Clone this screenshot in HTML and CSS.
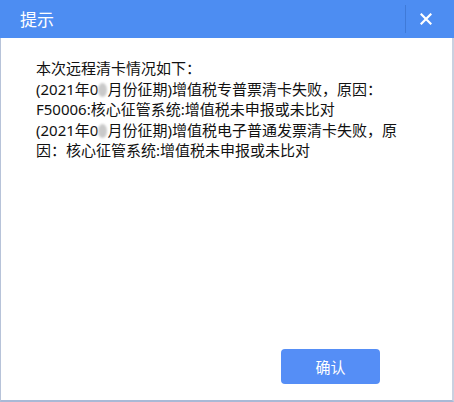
FILE: index.html
```html
<!DOCTYPE html>
<html lang="zh-CN">
<head>
<meta charset="utf-8">
<title>提示</title>
<link rel="stylesheet" href="styles.css">
</head>
<body>
<div class="dialog">
  <div class="titlebar">
    <span class="title">提示</span>
    <span class="sep"></span>
    <span class="close">
      <svg width="12" height="12" viewBox="0 0 12 12"><path d="M1.5 1.5 L10.5 10.5 M10.5 1.5 L1.5 10.5" stroke="#ffffff" stroke-width="2.2" stroke-linecap="square"/></svg>
    </span>
  </div>
  <div class="body">
    <p class="msg">本次远程清卡情况如下：<br>(2021年0<span class="redact"></span>月份征期)增值税专普票清卡失败，原因：<br>F50006:核心征管系统:增值税未申报或未比对<br>(2021年0<span class="redact"></span>月份征期)增值税电子普通发票清卡失败，原<br>因：核心征管系统:增值税未申报或未比对</p>
  </div>
  <div class="footer">
    <button class="btn">确认</button>
  </div>
</div>
</body>
</html>
```

FILE: styles.css
```css
html, body {
  margin: 0;
  padding: 0;
  background: #ffffff;
}
body {
  font-family: "Noto Sans", "Noto Sans CJK SC", sans-serif;
}
.dialog {
  width: 454px;
  height: 402px;
  box-sizing: border-box;
  display: flex;
  flex-direction: column;
  border-left: 1px solid #b7c3d9;
  border-right: 2px solid #c9d1e0;
  border-bottom: 2px solid #a9b9d6;
  background: #ffffff;
}
.titlebar {
  height: 38px;
  background: #4d8df2;
  display: flex;
  align-items: center;
  margin: 0 -2px 0 -1px;
  padding-left: 20px;
  padding-right: 22px;
}
.title {
  color: #ffffff;
  font-family: "Noto Sans CJK SC", sans-serif;
  font-size: 17px;
  flex: 1;
  line-height: 20px;
}
.sep {
  width: 1px;
  height: 28px;
  background: #3f7ad8;
  margin-right: 14px;
}
.close {
  width: 12px;
  height: 12px;
  display: flex;
}
.body {
  flex: 1;
  padding: 20px 0 0 35px;
}
.msg {
  margin: 0;
  width: 380px;
  font-size: 15px;
  line-height: 20.5px;
  color: #111111;
}
.redact {
  display: inline-block;
  width: 9px;
  height: 14px;
  vertical-align: -2px;
  background: #c9c9c9;
  border-radius: 50%;
  filter: blur(1.2px);
}
.footer {
  display: flex;
  justify-content: flex-end;
  padding: 0 72px 16px 0;
}
.btn {
  width: 99px;
  height: 35px;
  border: none;
  border-radius: 4px;
  background: #558ef6;
  color: #ffffff;
  font-family: "Noto Sans CJK SC", sans-serif;
  font-size: 15px;
  padding: 0;
}
```
